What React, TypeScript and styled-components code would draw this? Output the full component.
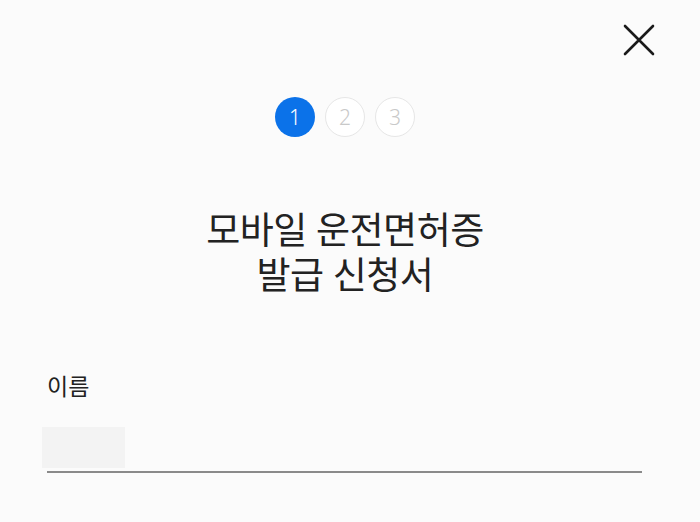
import styled, { createGlobalStyle } from 'styled-components';

const GlobalStyle = createGlobalStyle`
	html, body {
		margin: 0;
		padding: 0;
		background: #fbfbfb;
	}
	body {
		font-family: "Noto Sans", "Noto Sans CJK KR", sans-serif;
		color: #1f1f1f;
	}
`;

const Page = styled.div`
	width: 690px;
	height: 522px;
	overflow: hidden;
	display: flex;
	flex-direction: column;
	box-sizing: border-box;
`;

const TopBar = styled.header`
	display: flex;
	justify-content: flex-end;
	padding: 24px 35px 0 0;
	height: 56px;
	box-sizing: border-box;
`;

const CloseButton = styled.button`
	width: 32px;
	height: 32px;
	padding: 0;
	border: 0;
	background: transparent;
	display: flex;
	align-items: center;
	justify-content: center;
	cursor: pointer;
`;

const Steps = styled.ol`
	display: flex;
	justify-content: center;
	gap: 10px;
	list-style: none;
	margin: 41px 0 0;
	padding: 0;
`;

const Step = styled.li<{ $active?: boolean }>`
	width: 40px;
	height: 40px;
	border-radius: 50%;
	box-sizing: border-box;
	display: flex;
	align-items: center;
	justify-content: center;
	font-size: 21px;
	font-weight: 300;
	line-height: 1;
	background: ${(p) => (p.$active ? '#0b72e9' : '#ffffff')};
	border: ${(p) => (p.$active ? '0' : '1.5px solid #e6e6e6')};
	color: ${(p) => (p.$active ? '#ffffff' : '#c9c9c9')};
`;

const Title = styled.h1`
	margin: 70px 0 0;
	display: flex;
	flex-direction: column;
	align-items: center;
	font-size: 37px;
	font-weight: 400;
	line-height: 45px;
	color: #222;
	letter-spacing: -0.5px;
`;

const TitleLine = styled.span`
	display: block;
`;

const Field = styled.div`
	margin: 74px 48px 0 47px;
	display: flex;
	flex-direction: column;
`;

const Label = styled.label`
	font-size: 23px;
	line-height: 30px;
	color: #222;
`;

const InputWrap = styled.div`
	margin-top: 24px;
	height: 46px;
	position: relative;
	border-bottom: 2px solid #8a8a8a;
`;

const Placeholder = styled.div`
	position: absolute;
	left: -5px;
	top: 2px;
	width: 83px;
	height: 41px;
	background: #f3f3f3;
`;

const Input = styled.input`
	width: 100%;
	height: 100%;
	border: 0;
	background: transparent;
	outline: none;
	font-size: 20px;
	position: relative;
`;

const CloseIcon = () => (
	<svg width="32" height="32" viewBox="0 0 32 32" fill="none">
		<path d="M2 2L30 30M30 2L2 30" stroke="#1a1a1a" strokeWidth="2.6" strokeLinecap="round" />
	</svg>
);

export default function App() {
	return (
		<Page>
			<GlobalStyle />
			<TopBar>
				<CloseButton aria-label="닫기">
					<CloseIcon />
				</CloseButton>
			</TopBar>
			<Steps>
				<Step $active>1</Step>
				<Step>2</Step>
				<Step>3</Step>
			</Steps>
			<Title>
				<TitleLine>모바일 운전면허증</TitleLine>
				<TitleLine>발급 신청서</TitleLine>
			</Title>
			<Field>
				<Label>이름</Label>
				<InputWrap>
					<Placeholder />
					<Input />
				</InputWrap>
			</Field>
		</Page>
	);
}
